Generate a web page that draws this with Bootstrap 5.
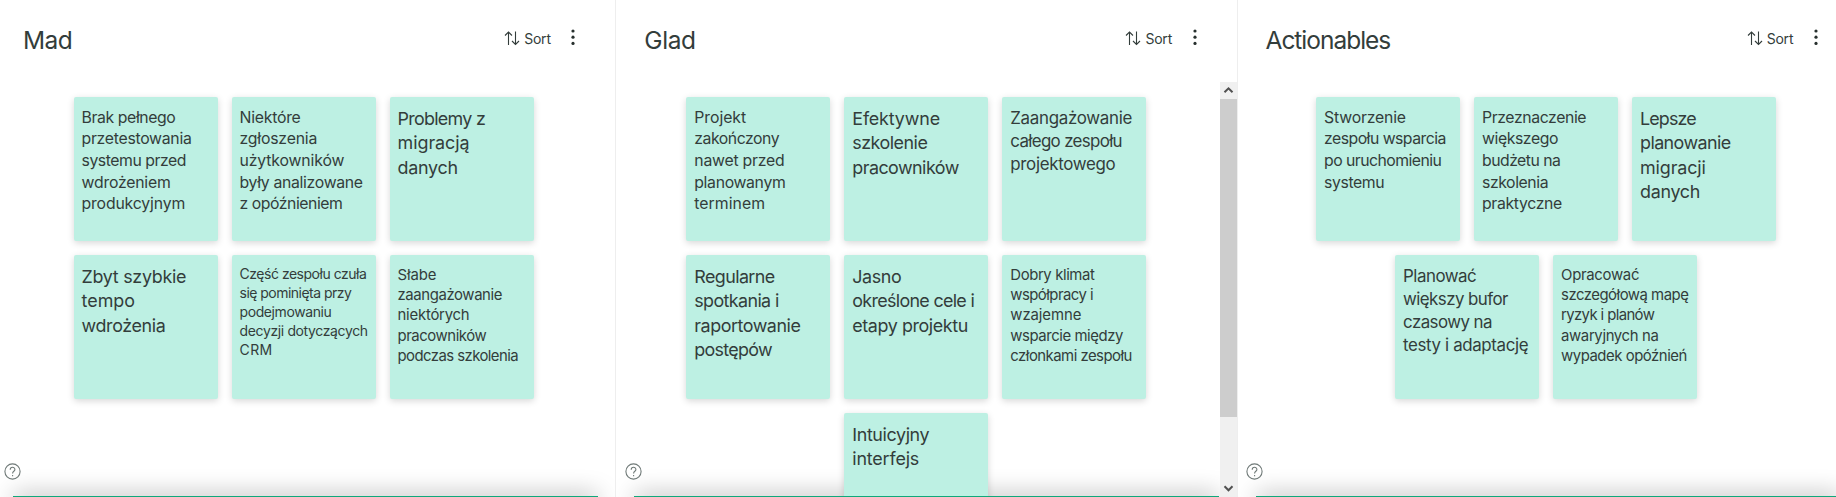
<!DOCTYPE html>
<html lang="pl">
<head>
<meta charset="utf-8">
<meta name="viewport" content="width=device-width, initial-scale=1">
<title>Retrospective board</title>
<link href="https://cdn.jsdelivr.net/npm/bootstrap@5.3.0/dist/css/bootstrap.min.css" rel="stylesheet">
<style>
body{font-family:Inter,"Liberation Sans",Arial,sans-serif;color:#333d3b;background:#fff}
.board{height:497px;margin-left:-5px}
.lane{width:621.25px;border-right:1px solid #eee}
.lane-head{height:82px;padding:0 39px 0 28px}
.lane-title{font-size:24.5px;line-height:30px;margin-top:24.500px;white-space:nowrap}
.sort-btn{font-size:14px;line-height:20px;margin-top:28px;color:#333d3b}
.sort-btn svg{margin:2.5px 4px 0 0}
.sort-label{margin-top:1px}
.dots{margin:29px 0 0 19.5px}
.lane-body{min-height:0}
.notes{padding:15px 3.2px 0 0;gap:14px;align-content:flex-start}
.notes-wrap{min-width:0}
.sticky{width:144px;height:144px;padding:9.9px 0 0 8px;border-radius:2px;background:#bdf0e3;box-shadow:0 2px 7px rgba(0,0,0,.16);z-index:2}
.sticky span{display:block;white-space:nowrap;width:max-content}
.s1{font-size:17.9px;line-height:24.4px}
.s2{font-size:16.9px;line-height:23px}
.s3{font-size:15.8px;line-height:21.6px}
.s4{font-size:14.9px;line-height:20.2px}
.s5{font-size:14px;line-height:18.9px}
.notes .gap-row{gap:14px}
.help{left:8.5px;bottom:17.5px;z-index:3}
.composer{left:18px;width:585px;height:1px;bottom:0;background:#10a87b;z-index:3}
.composer-shade{left:18px;width:585px;height:10px;bottom:-9px;border-radius:4px;box-shadow:0 0 24px rgba(0,0,0,.4);z-index:1}
.scroller{width:17px;background:#f0f0f0;z-index:4}
.thumb{height:318px;background:#cdcdcd}
.scroller svg{display:block}
</style>
</head>
<body class="overflow-hidden">
<div class="board d-flex overflow-hidden" id="board"></div>

<template id="lane-tpl">
  <section class="lane d-flex flex-column flex-shrink-0 position-relative overflow-hidden">
    <header class="lane-head d-flex align-items-start flex-shrink-0">
      <h2 class="lane-title mb-0 me-auto fw-normal"><span></span></h2>
      <button class="sort-btn btn p-0 border-0 d-flex align-items-start flex-shrink-0" type="button">
        <svg width="16" height="15" viewBox="0 0 16 15" fill="none" stroke="#333d3b" stroke-width="1.1"><path d="M4.500 14V1M1 4.500l3.500-3.500 3.500 3.500M11.500 .5v13M8 10l3.500 3.500 3.500-3.500"/></svg><span class="sort-label">Sort</span>
      </button>
      <svg class="dots flex-shrink-0" width="6" height="18" viewBox="0 0 6 18" fill="#27302e"><circle cx="3" cy="2" r="1.600"/><circle cx="3" cy="8.200" r="1.600"/><circle cx="3" cy="14.400" r="1.600"/></svg>
    </header>
    <div class="lane-body d-flex flex-grow-1">
      <div class="notes-wrap flex-grow-1"><div class="notes d-flex flex-column"></div></div>
    </div>
    <svg class="help position-absolute" width="17" height="17" viewBox="0 0 17 17" fill="none" stroke="#6f7977" stroke-width="1.1"><circle cx="8.500" cy="8.500" r="7.600"/><path d="M6.200 6.700c0-3.200 4.700-3.100 4.700-.3 0 1.900-2.300 1.900-2.300 4"/><path d="M8.600 11.900v1.300"/></svg>
    <div class="composer-shade position-absolute"></div>
    <div class="composer position-absolute"></div>
  </section>
</template>

<template id="scroll-tpl">
  <div class="scroller flex-shrink-0 d-flex flex-column">
    <svg width="17" height="17" viewBox="0 0 17 17" fill="none" stroke="#505050" stroke-width="2"><path d="M4.500 10.300l4-4 4 4"/></svg>
    <div class="thumb"></div>
    <svg class="mt-auto" width="17" height="17" viewBox="0 0 17 17" fill="none" stroke="#505050" stroke-width="2"><path d="M4.500 6.300l4 4 4-4"/></svg>
  </div>
</template>

<script src="https://cdn.jsdelivr.net/npm/bootstrap@5.3.0/dist/js/bootstrap.bundle.min.js"></script>
<script>
// Each note: size class, then its lines with the advance width each should take.
const lanes = [
  {title:["Mad",47], rows:[
    [["s3",["Brak pełnego",93],["przetestowania",109],["systemu przed",103.6],["wdrożeniem",88],["produkcyjnym",102.4]],
     ["s3",["Niektóre",60],["zgłoszenia",76.5],["użytkowników",103.6],["były analizowane",122.2],["z opóźnieniem",102]],
     ["s1",["Problemy z",87],["migracją",70.8],["danych",59.3]]],
    [["s1",["Zbyt szybkie",103.6],["tempo",52.2],["wdrożenia",83]],
     ["s5",["Część zespołu czuła",126],["się pominięta przy",111],["podejmowaniu",91],["decyzji dotyczących",127.3],["CRM",31.4]],
     ["s4",["Słabe",37.6],["zaangażowanie",103.6],["niektórych",70.8],["pracowników",87.8],["podczas szkolenia",119.8]]]]},
  {title:["Glad",49], scroll:true, rows:[
    [["s3",["Projekt",50.6],["zakończony",84],["nawet przed",89],["planowanym",90.2],["terminem",69.4]],
     ["s1",["Efektywne",86.5],["szkolenie",74.3],["pracowników",105.7]],
     ["s2",["Zaangażowanie",120.8],["całego zespołu",111],["projektowego",104]]],
    [["s1",["Regularne",79.6],["spotkania i",83.7],["raportowanie",105.3],["postępów",77.1]],
     ["s1",["Jasno",48.2],["określone cele i",121.2],["etapy projektu",114.7]],
     ["s4",["Dobry klimat",83.3],["współpracy i",82],["wzajemne",69.8],["wsparcie między",111.8],["członkami zespołu",120.8]]],
    [["s1",["Intuicyjny",76],["interfejs",65.7]]]]},
  {title:["Actionables",123], rows:[
    [["s3",["Stworzenie",80.7],["zespołu wsparcia",121],["po uruchomieniu",116.6],["systemu",59.3]],
     ["s3",["Przeznaczenie",103.2],["większego",75.1],["budżetu na",77.5],["szkolenia",65.2],["praktyczne",79]],
     ["s1",["Lepsze",55.4],["planowanie",89.8],["migracji",64.5],["danych",59]]],
    [["s2",["Planować",72.4],["większy bufor",104],["czasowy na",88.2],["testy i adaptację",124.2]],
     ["s4",["Opracować",77.1],["szczegółową mapę",126.5],["ryzyk i planów",92.5],["awaryjnych na",96.5],["wypadek opóźnień",125]]]]}
];
// Tracks a line so that its glyphs fill the given width.
function fit(el, width){
  const n = el.textContent.length;
  el.style.letterSpacing = ((width + 1.3 - el.getBoundingClientRect().width) / (n - 1)).toFixed(3) + "px";
}
const board = document.getElementById("board");
for (const lane of lanes){
  const sec = document.getElementById("lane-tpl").content.firstElementChild.cloneNode(true);
  board.append(sec);
  const t = sec.querySelector(".lane-title span");
  t.textContent = lane.title[0];
  fit(t, lane.title[1] + 1.5);
  fit(sec.querySelector(".sort-label"), 25.5);
  const notes = sec.querySelector(".notes");
  for (const row of lane.rows){
    const r = document.createElement("div");
    r.className = "gap-row d-flex justify-content-center";
    notes.append(r);
    for (const [size, ...lines] of row){
      const card = document.createElement("article");
      card.className = "sticky flex-shrink-0 position-relative " + size;
      r.append(card);
      for (const [text, w] of lines){
        const s = document.createElement("span");
        s.textContent = text;
        card.append(s);
        fit(s, w);
      }
    }
  }
  if (lane.scroll) sec.querySelector(".lane-body").append(document.getElementById("scroll-tpl").content.cloneNode(true));
}
</script>
</body>
</html>
